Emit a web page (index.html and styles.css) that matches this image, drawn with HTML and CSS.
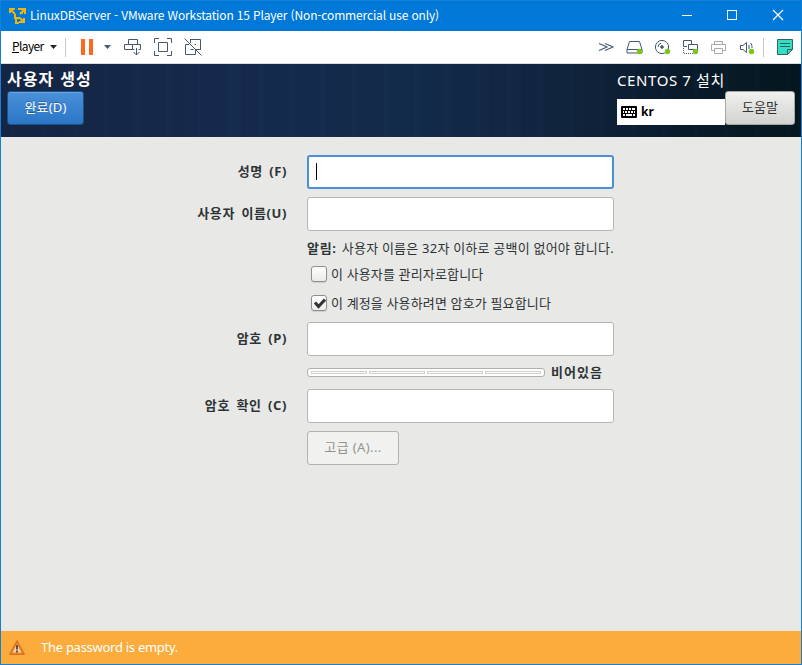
FILE: index.html
```html
<!DOCTYPE html>
<html lang="ko">
<head>
<meta charset="utf-8">
<title>LinuxDBServer</title>
<link rel="stylesheet" href="styles.css">
</head>
<body>
<div class="window">
  <div class="titlebar">
    <svg class="app-icon" width="18" height="18" viewBox="0 0 18 18" fill="none" stroke="#f0b310" stroke-width="2"><path d="M1 6V2h5M9 2h7v5M6 7v4h5M11 6h3M15 11v4h-5M7 12v4h3M2 3l4 4M15 3l-4 4M15 15l-4-4"/></svg>
    <span class="title">LinuxDBServer - VMware Workstation 15 Player (Non-commercial use only)</span>
    <div class="controls">
      <svg width="46" height="30" viewBox="0 0 46 30" stroke="#fff"><path d="M18 14.500h10"/></svg>
      <svg width="46" height="30" viewBox="0 0 46 30" stroke="#fff" fill="none"><rect x="17.500" y="9.500" width="9" height="9"/></svg>
      <svg width="46" height="30" viewBox="0 0 46 30" stroke="#fff" stroke-width="1.200"><path d="M17 9l10 10M27 9L17 19"/></svg>
    </div>
  </div>
  <div class="toolbar">
    <span class="player"><u>P</u>layer</span>
    <svg class="caret" width="7" height="4"><path d="M0 0h7L3.500 4z" fill="#222"/></svg>
    <i class="sep"></i>
    <svg class="pause" width="12" height="16"><path d="M0 0h4v16H0zM8 0h4v16H8z" fill="#ff671b"/></svg>
    <svg class="caret2" width="7" height="4"><path d="M0 0h7L3.500 4z" fill="#4a5c6c"/></svg>
    <svg class="tool" width="18" height="18" fill="none" stroke="#46586a"><path d="M4.500 6.500v-5h9v5M.500 6.500h8v5h-8zM8.500 11.500v-5h8v5h-2M8.500 11.500h2M12.500 10v7M9.500 14l3 3 3-3"/></svg>
    <svg class="tool" width="18" height="18" fill="none" stroke="#46586a"><path d="M.500 5V.500H5M13 .500h4.500V5M17.500 13v4.500H13M5 17.500H.500V13M4.500 4.500h9v9h-9z"/></svg>
    <svg class="tool" width="18" height="18" fill="none" stroke="#46586a"><path d="M6 1.500h10.500V12M12 6.500h-1.500M5 6.500H1.500v10h10V12M6.500 5V1.500M6.500 11.500h3M12 11.500h4.500M.500.500l17 17"/></svg>
    <div class="devices">
      <svg width="18" height="18" fill="none" stroke="#46586a"><path d="M1 5.500L9 9l-8 3.500M7 5.500L15 9l-8 3.500" stroke-width="1.100"/></svg>
      <svg width="18" height="18" fill="none" stroke="#46586a"><path d="M3.500 3.500h10l2.500 8v3.500H1v-3.500zM1 11.500h15"/><circle class="dot" cx="13.500" cy="13.500" r="2.700"/></svg>
      <svg width="18" height="18" fill="none" stroke="#46586a"><circle cx="8" cy="9" r="6.600"/><circle cx="8" cy="9" r="1.300" fill="#46586a"/><path d="M4 9a4 4 0 0 1 3-3.800"/><circle class="dot" cx="13.500" cy="13.500" r="2.700"/></svg>
      <svg width="18" height="18" fill="none" stroke="#46586a"><path d="M5 8.500H1.500v-6h8V6M6.500 6.500h9v5h-9z"/><path d="M1.500 10v5.500H11" stroke-dasharray="1 1"/><circle class="dot" cx="13.500" cy="13.500" r="2.700"/></svg>
      <svg width="18" height="18" fill="none" stroke="#a4abb1"><path d="M4.500 7V3.500h8V7M4.500 12.500h-3v-6h14v6h-3M4.500 10.500h8v5h-8z"/></svg>
      <svg width="18" height="18" fill="none" stroke="#46586a"><path d="M2.500 7.500H5l3.500-3v10l-3.500-3H2.500zM11 7v4M12.500 5c1.500 1 1.500 3 1.500 5"/><circle class="dot" cx="13.500" cy="13.500" r="2.700"/></svg>
    </div>
    <i class="sep sep-right"></i>
    <svg class="note-icon" width="16" height="16"><path d="M.500.500h15v10l-5 5H.500z" fill="#34dfc1" stroke="#345f6c"/><path d="M3 4.500h10M3 7.500h10M10.500 15.500v-5h5" fill="none" stroke="#345f6c"/></svg>
  </div>
  <header class="banner">
    <div class="banner-left">
      <h1>사용자 생성</h1>
      <button class="done">완료(D)</button>
    </div>
    <div class="banner-right">
      <div class="product">CENTOS 7 설치</div>
      <div class="banner-row">
        <div class="keyboard"><svg width="16" height="12"><rect width="16" height="12" rx="1"/><path d="M2 3h2M5 3h2M8 3h2M11 3h3M2 6h1M4 6h2M7 6h2M10 6h2M13 6h1M2 9h2M5 9h6M12 9h2" stroke="#fff" stroke-width="1.800"/></svg><b>kr</b></div>
        <button class="help">도움말</button>
      </div>
    </div>
  </header>
  <main class="form">
    <label class="lbl">성명 (F)</label>
    <div class="field focused"><i class="cursor"></i></div>
    <label class="lbl">사용자 이름(U)</label>
    <div class="field"></div>
    <div class="note"><b>알림:</b> <span>사용자 이름은 32자 이하로 공백이 없어야 합니다.</span></div>
    <div class="check"><i class="box"></i><span>이 사용자를 관리자로합니다</span></div>
    <div class="check second"><i class="box"><svg width="14" height="14"><path d="M3 6.500l3.500 4L13 3.500" fill="none" stroke="#2e3436" stroke-width="3"/></svg></i><span>이 계정을 사용하려면 암호가 필요합니다</span></div>
    <label class="lbl">암호 (P)</label>
    <div class="field"></div>
    <div class="strength"><div class="meter"><i></i><i></i><i></i><i></i></div><b>비어있음</b></div>
    <label class="lbl">암호 확인 (C)</label>
    <div class="field"></div>
    <button class="advanced" disabled>고급 (A)...</button>
  </main>
  <footer class="warning">
    <svg width="16" height="16"><path d="M8 1L15 14.200H1z" fill="#f08a35" stroke="#e0701f" stroke-width="1.600" stroke-linejoin="round"/><path d="M8 4L12.400 12.500H3.600z" fill="#fbd0a0"/><path d="M8 5v4.500M8 10.500v2" stroke="#444" stroke-width="1.800"/></svg>
    <span>The password is empty.</span>
  </footer>
</div>
</body>
</html>
```
FILE: styles.css
```css
* { box-sizing: border-box; }
body { margin: 0; font-family: "Noto Sans", "Noto Sans CJK KR", sans-serif; font-size: 13px; color: #2e3436; }
button { font: inherit; padding: 0 0 3px; margin: 0; display: block; }
svg { display: block; flex: none; }
span, b, label, h1, .product { white-space: nowrap; }
.window { width: 802px; height: 665px; border: 1px solid #1480d9; display: flex; flex-direction: column; background: #e8e8e6; overflow: hidden; }
.titlebar { height: 30px; flex: none; background: #0078d7; display: flex; align-items: center; color: #fff; padding-left: 8px; }
.title { font: 12px/28px "Noto Sans CJK KR", sans-serif; margin-left: 3px; margin-top: -2px; letter-spacing: -.15px; }
.controls { display: flex; margin-left: auto; margin-right: -1px; }
.toolbar { height: 33px; flex: none; background: #fff; border-bottom: 1px solid #dcdcdc; display: flex; align-items: center; padding-left: 11px; }
.player { font: 12px/28px "Noto Sans CJK KR", sans-serif; color: #000; width: 32px; margin-top: -2px; letter-spacing: -.6px; }
.caret { margin-left: 6px; }
.sep { width: 1px; height: 19px; background: #c7c7c7; margin-left: 8px; }
.pause { margin-left: 15px; }
.caret2 { margin: 0 1px 0 11px; }
.tool { margin-left: 12px; }
.devices { display: flex; gap: 10px; margin-left: auto; }
.dot { fill: #7cc61c; stroke: none; }
.sep-right { margin-left: 7px; }
.note-icon { margin: 0 8px 0 13px; }
.banner { height: 73px; flex: none; display: flex; justify-content: space-between; padding: 0 6px; color: #fff;
  background: repeating-linear-gradient(90deg, transparent 0 9px, rgba(60,110,180,.04) 12px, transparent 16px 23px, rgba(0,0,20,.03) 26px, transparent 31px), linear-gradient(90deg, #152543 0, #152a4e 30%, #132b4a 52%, #10243e 70%, #091b2b 85%, #04171d 100%); }
h1 { margin: 2px 0 0; font-size: 16px; line-height: 26px; height: 25px; font-weight: 700; letter-spacing: 1px; word-spacing: 1px; }
.done { width: 77px; height: 34px; border: 1px solid #1c5187; border-radius: 3px; background: linear-gradient(#4a90d9, #2a76c6); box-shadow: inset 0 1px #65a5e5; color: #fff; text-shadow: 0 -1px rgba(0,0,0,.3); letter-spacing: .2px; }
.banner-right { width: 178px; }
.product { font-size: 15px; line-height: 27px; padding-top: 3px; height: 27px; letter-spacing: .6px; }
.banner-row { display: flex; }
.keyboard { width: 108px; height: 26px; margin-top: 8px; background: #fff; color: #000; display: flex; align-items: center; gap: 4px; padding-left: 4px; }
.keyboard b { font-size: 12px; margin-top: -2px; }
.help { width: 70px; height: 34px; border: 1px solid #a6a6a2; border-radius: 3px; background: linear-gradient(#f0f0ee, #d2d2cf); color: #2e3436; }
.form { flex: 1; display: grid; grid-template-columns: 286px 307px; column-gap: 20px; grid-template-rows: 42px 42px 20px 30px 33px 42px 25px 42px 34px; align-items: start; align-content: start; padding-top: 18px; }
.lbl { font-weight: 700; text-align: right; line-height: 32px; grid-column: 1; letter-spacing: .6px; word-spacing: 2.5px; }
.field { height: 34px; grid-column: 2; background: #fff; border: 1px solid #b5b5b1; border-radius: 3px; }
.focused { border: 2px solid #4a90d9; padding: 6px 7px; }
.cursor { display: block; width: 1px; height: 17px; background: #000; }
.note { grid-column: 2; line-height: 18px; white-space: nowrap; letter-spacing: .22px; }
.note b { letter-spacing: .7px; margin-right: 1.5px; }
.check { grid-column: 2; height: 30px; display: flex; align-items: center; padding-left: 4px; gap: 4px; letter-spacing: .15px; }
.check span { margin-top: -2px; }
.second { height: 28px; }
.box { width: 16px; height: 16px; border: 1px solid #8f8f8b; border-radius: 3px; background: linear-gradient(#fff, #ebebea); box-shadow: 0 1px 1px #ccc; }
.strength { grid-column: 2; height: 18px; display: flex; align-items: center; gap: 6px; }
.strength b { letter-spacing: 1px; margin-top: -4px; }
.meter { width: 238px; height: 9px; margin-top: -1px; border: 1px solid #b0b0ac; border-radius: 3px; background: #fff; display: flex; gap: 2px; padding: 2px 3px; }
.meter i { flex: 1; border: 1px solid #d0d0cd; height: 3px; }
.advanced { grid-column: 2; width: 92px; height: 34px; border: 1px solid #b2b2ae; border-radius: 3px; background: #f1f1f0; color: #92958f; letter-spacing: .4px; }
.warning { height: 33px; flex: none; background: #fbac3c; color: #fff; display: flex; align-items: center; padding-left: 8px; gap: 16px; letter-spacing: -.27px; }
.warning span { margin-top: -1px; }
```
